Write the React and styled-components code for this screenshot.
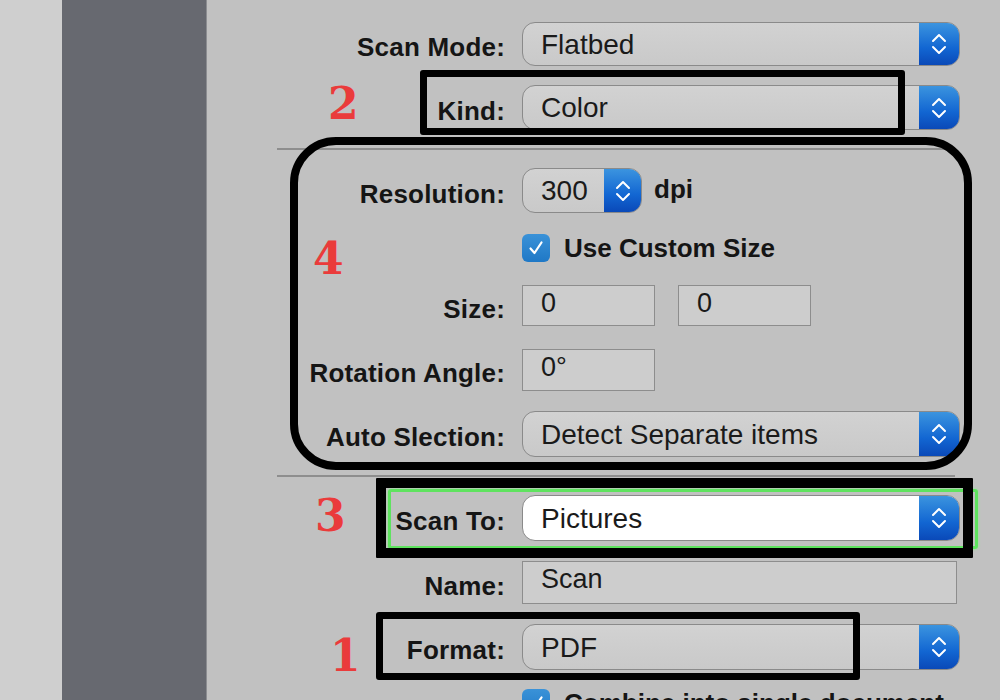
import React from 'react';
import styled, { createGlobalStyle } from 'styled-components';

const GlobalStyle = createGlobalStyle`
  html, body {
    margin: 0;
    padding: 0;
    overflow: hidden;
  }
  body {
    font-family: "Liberation Sans", Arial, sans-serif;
    background: #c1c1c1;
  }
`;

const Page = styled.div`
  display: flex;
  width: 1000px;
  height: 700px;
  overflow: hidden;
`;

const Gutter = styled.div`
  width: 62px;
  background: #cfcfcf;
`;

const Sidebar = styled.div`
  width: 144px;
  background: #676970;
  border-right: 1px solid #8c8d91;
`;

const Panel = styled.div`
  position: relative;
  flex: 1;
  background: #c1c1c1;
`;

const Form = styled.div`
  display: flex;
  flex-direction: column;
  gap: 19px;
  padding-top: 22px;
`;

const Row = styled.div`
  display: flex;
  align-items: center;
  gap: 17px;
  height: ${p => p.h || 45}px;
`;

const Label = styled.div`
  width: 298px;
  text-align: right;
  font-weight: 700;
  font-size: 26px;
  color: #151515;
  padding-top: 7px;
  white-space: nowrap;
  letter-spacing: 0.2px;
`;

const Separator = styled.div`
  height: 2px;
  margin: -1px 0 -1px 70px;
  width: 678px;
  background: #8e8e8e;
`;

const Popup = styled.div`
  display: flex;
  width: ${p => p.w || 438}px;
  height: 100%;
  box-sizing: border-box;
  border: 1px solid #8a8a8a;
  border-radius: 13px;
  overflow: hidden;
  background: ${p => p.white ? '#ffffff' : 'linear-gradient(#d2d2d2, #c9c9c9)'};
`;

const PopupText = styled.div`
  flex: 1;
  padding-left: 18px;
  font-size: 28px;
  color: #1a1a1a;
  display: flex;
  align-items: center;
  padding-top: 1px;
`;

const Stepper = styled.div`
  width: ${p => p.w || 40}px;
  background: linear-gradient(#3b94df, #1266d2 60%, #0a49b8);
  display: flex;
  align-items: center;
  justify-content: center;
`;

const Unit = styled.span`
  font-weight: 700;
  font-size: 26px;
  color: #151515;
  margin-left: -5px;
  padding-bottom: 2px;
`;

const Field = styled.div`
  width: ${p => p.w || 133}px;
  height: ${p => p.fh || 41}px;
  box-sizing: border-box;
  border: 1px solid #8d8d8d;
  background: #cdcdcd;
  font-size: 27px;
  color: #1a1a1a;
  padding: 2px 0 0 18px;
`;

const Fields = styled.div`
  display: flex;
  gap: 23px;
`;

const CheckRow = styled.div`
  display: flex;
  align-items: center;
  gap: 14px;
  height: ${p => p.h || 32}px;
  padding-left: 315px;
`;

const Box = styled.div`
  width: 28px;
  height: 28px;
  border-radius: 6px;
  background: linear-gradient(#3a92d8, #1f78c6);
  display: flex;
  align-items: center;
  justify-content: center;
`;

const CheckText = styled.span`
  font-weight: 700;
  font-size: 26px;
  color: #151515;
  white-space: nowrap;
`;

const Mark = styled.div`
  position: absolute;
  left: ${p => p.x}px;
  top: ${p => p.y}px;
  width: ${p => p.w}px;
  height: ${p => p.h}px;
  box-sizing: border-box;
  border: ${p => p.b}px solid #000;
  border-radius: ${p => p.r || 3}px;
  pointer-events: none;
`;

const Focus = styled.div`
  position: absolute;
  left: 181px;
  top: 489px;
  width: 590px;
  height: 60px;
  box-sizing: border-box;
  border: 3px solid #5fe35f;
  border-radius: 3px;
  box-shadow: 0 0 3px #8ff08f;
  pointer-events: none;
`;

const Num = styled.div`
  position: absolute;
  left: ${p => p.x}px;
  top: ${p => p.y}px;
  font-family: "DejaVu Serif", "Liberation Serif", serif;
  font-weight: 700;
  font-size: 44px;
  line-height: 44px;
  color: #ea3b3b;
`;

const Chevrons = () => (
  <svg width="18" height="28" viewBox="0 0 18 28" fill="none" stroke="#fff" strokeWidth="2" strokeLinecap="round" strokeLinejoin="round">
    <path d="M3 11 L9 5 L15 11" />
    <path d="M3 17 L9 23 L15 17" />
  </svg>
);

const Check = () => (
  <svg width="18" height="18" viewBox="0 0 18 18" fill="none" stroke="#fff" strokeWidth="2.2" strokeLinecap="round" strokeLinejoin="round">
    <path d="M3.5 9.5 L7.5 14 L14.5 3.5" />
  </svg>
);

const Select = ({ value, w, stepW, white }) => (
  <Popup w={w} white={white}>
    <PopupText>{value}</PopupText>
    <Stepper w={stepW}><Chevrons /></Stepper>
  </Popup>
);

const App = () => {
  return (
    <Page>
      <GlobalStyle />
      <Gutter />
      <Sidebar />
      <Panel>
        <Form>
          <Row h={44}>
            <Label>Scan Mode:</Label>
            <Select value="Flatbed" />
          </Row>
          <Row>
            <Label>Kind:</Label>
            <Select value="Color" />
          </Row>
          <Separator />
          <Row>
            <Label>Resolution:</Label>
            <Select value="300" w={120} stepW={37} />
            <Unit>dpi</Unit>
          </Row>
          <CheckRow>
            <Box><Check /></Box>
            <CheckText>Use Custom Size</CheckText>
          </CheckRow>
          <Row>
            <Label>Size:</Label>
            <Fields>
              <Field>0</Field>
              <Field>0</Field>
            </Fields>
          </Row>
          <Row>
            <Label>Rotation Angle:</Label>
            <Field fh={42}>0°</Field>
          </Row>
          <Row h={46}>
            <Label>Auto Slection:</Label>
            <Select value="Detect Separate items" />
          </Row>
          <Separator />
          <Row h={46}>
            <Label>Scan To:</Label>
            <Select value="Pictures" white />
          </Row>
          <Row>
            <Label>Name:</Label>
            <Field w={435} fh={43}>Scan</Field>
          </Row>
          <Row h={46}>
            <Label>Format:</Label>
            <Select value="PDF" />
          </Row>
          <CheckRow h={28}>
            <Box><Check /></Box>
            <CheckText>Combine into single document</CheckText>
          </CheckRow>
        </Form>

        <Focus />
        <Mark x={213} y={70} w={485} h={65} b={7} />
        <Mark x={83} y={137} w={682} h={333} b={8} r={46} />
        <Mark x={169} y={478} w={597} h={80} b={10} r={1} />
        <Mark x={169} y={612} w={484} h={68} b={7} />
        <Num x={121} y={82}>2</Num>
        <Num x={106} y={237}>4</Num>
        <Num x={108} y={494}>3</Num>
        <Num x={123} y={634}>1</Num>
      </Panel>
    </Page>
  );
};

export default App;
